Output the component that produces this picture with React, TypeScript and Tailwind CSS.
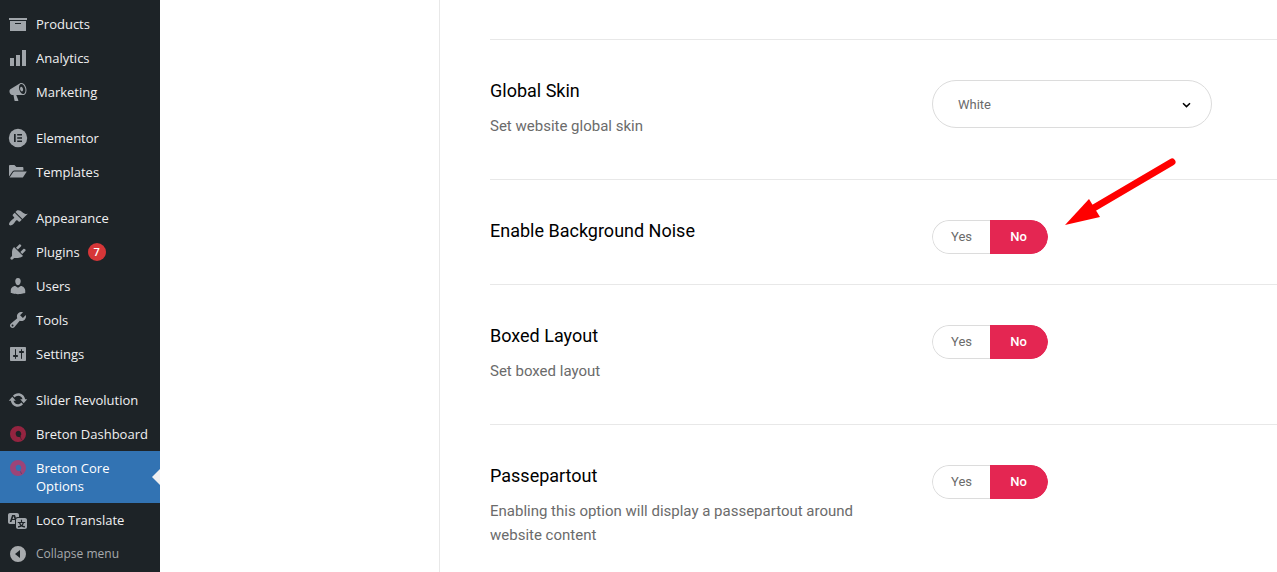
import { useState } from 'react';
import type { ReactNode } from 'react';

type MenuItem = {
	label: string;
	icon: ReactNode;
	count?: number;
	active?: boolean;
};

const DashIcon = ({ d }: { d: string }) => (
	<svg viewBox="0 0 20 20" fill="currentColor" className="size-5" aria-hidden="true">
		<path d={d} fillRule="evenodd" />
	</svg>
);

const BretonIcon = () => (
	<svg viewBox="0 0 20 20" className="size-5 opacity-60" aria-hidden="true">
		<path
			d="M10 2a8 8 0 1 0 0 16 8 8 0 0 0 0-16zm.2 4.8a3.1 3.1 0 0 1 2.2 5.3l.8 1.9-1.8-1.1a3.1 3.1 0 1 1-1.2-6.1z"
			fill="#e42652"
			fillRule="evenodd"
		/>
		<path d="M12.4 13.4l1.2 2.6" stroke="#8a1f3c" strokeWidth="1" />
	</svg>
);

const ElementorIcon = () => (
	<svg viewBox="0 0 20 20" className="size-5" aria-hidden="true">
		<circle cx="10" cy="10" r="9.2" fill="currentColor" />
		<path
			d="M6 6h1.7v8H6zM9.2 6H14v1.6H9.2zM9.2 9.2H14v1.6H9.2zM9.2 12.4H14V14H9.2z"
			fill="#1d2327"
		/>
	</svg>
);

const menu: MenuItem[][] = [
	[
		{
			label: 'Products',
			icon: <DashIcon d="M19 4v2H1V4h18zM2 7h16v10H2V7zm11 3V9H7v1h6z" />
		},
		{
			label: 'Analytics',
			icon: <DashIcon d="M18 18V2h-4v16h4zm-6 0V7H8v11h4zm-6 0v-8H2v8h4z" />
		},
		{
			label: 'Marketing',
			icon: (
				<DashIcon d="M18.15 5.94c.46 1.62.38 3.22-.02 4.48-.42 1.28-1.26 2.18-2.3 2.48-.16.06-.26.06-.4.06-.06.02-.12.02-.18.02-.06.02-.14.02-.22.02h-6.8l2.22 5.5c.02.14-.06.26-.14.34-.08.1-.24.16-.34.16H6.95c-.1 0-.26-.06-.34-.16-.08-.08-.16-.2-.14-.34l-1-5.5H4.25l-.02-.02c-.5.06-1.08-.18-1.54-.62s-.88-1.08-1.06-1.88c-.24-.8-.2-1.56-.02-2.2.18-.62.58-1.08 1.06-1.3l.02-.02 9-5.4c.1-.06.18-.1.24-.16.06-.04.14-.08.24-.12.16-.08.28-.12.5-.18 1.04-.3 2.24.1 3.22.98s1.84 2.24 2.26 3.86zm-2.58 5.98h-.02c.4-.1.74-.34 1.04-.7.58-.7.86-1.76.86-3.04 0-.64-.1-1.3-.28-1.98-.34-1.36-1.02-2.5-1.78-3.24s-1.68-1.1-2.46-.88c-.82.22-1.4.96-1.7 2-.32 1.04-.28 2.36.06 3.72.38 1.36 1 2.5 1.8 3.24.78.74 1.62 1.1 2.48.88zm-2.54-7.08c.22-.04.42-.02.62.04.38.16.76.48 1.02 1s.42 1.2.42 1.78c0 .3-.04.56-.12.8-.18.48-.44.84-.86.94-.34.1-.8-.06-1.14-.4s-.64-.86-.78-1.5c-.18-.62-.12-1.24.02-1.72s.48-.84.82-.94z" />
			)
		}
	],
	[
		{ label: 'Elementor', icon: <ElementorIcon /> },
		{
			label: 'Templates',
			icon: (
				<DashIcon d="M1 14.4V4.1C1 3.5 1.5 3 2 3h4.4l2 2h6c.6 0 1 .4 1 1v2.4H6.4c-.7 0-1.3.3-1.7.9zM1.6 15.6l3.7-5.6c.2-.4.6-.6 1-.6h12.5l-3.6 5.6c-.2.4-.6.6-1 .6z" />
			)
		}
	],
	[
		{
			label: 'Appearance',
			icon: (
				<DashIcon d="M14.48 11.06L7.41 3.99l1.5-1.5c.5-.56 2.3-.47 3.51.32 1.21.8 1.43 1.28 2.91 2.1 1.18.64 2.45 1.26 4.45.85zm-.71.71L6.7 4.7 4.93 6.47c-.39.39-.39 1.02 0 1.41l1.06 1.06c.39.39.39 1.03 0 1.42-.6.6-1.43 1.11-2.21 1.69-.35.26-.7.53-1.01.84C1.43 14.23.4 16.08 1.4 17.07c.99 1 2.84-.03 4.18-1.36.31-.31.58-.66.85-1.02.57-.78 1.08-1.61 1.69-2.21.39-.39 1.02-.39 1.41 0l1.06 1.06c.39.39 1.02.39 1.41 0z" />
			)
		},
		{
			label: 'Plugins',
			count: 7,
			icon: (
				<DashIcon d="M13.11 4.36L9.87 7.6 8 5.73l3.24-3.24c.35-.34 1.05-.2 1.56.32.52.51.66 1.21.31 1.55zm-8 1.77l.91-1.12 9.01 9.01-1.19.84c-.71.71-2.63 1.16-3.82 1.16H6.14L4.9 17.26c-.59.59-1.54.59-2.12 0-.59-.58-.59-1.53 0-2.12l1.24-1.24v-3.88c0-1.13.4-3.19 1.09-3.89zm7.26 3.97l3.24-3.24c.34-.35 1.04-.21 1.55.31.52.51.66 1.21.31 1.55l-3.24 3.25z" />
			)
		},
		{
			label: 'Users',
			icon: (
				<DashIcon d="M10 9.25c-2.27 0-2.73-3.44-2.73-3.44C7 4.02 7.82 2 9.97 2c2.16 0 2.98 2.02 2.71 3.81 0 0-.41 3.44-2.68 3.44zm0 2.57L12.72 10c2.39 0 4.52 2.33 4.52 4.53v2.49s-3.65 1.13-7.24 1.13c-3.65 0-7.24-1.13-7.24-1.13v-2.49c0-2.25 1.94-4.48 4.47-4.48z" />
			)
		},
		{
			label: 'Tools',
			icon: (
				<DashIcon d="M16.68 9.77c-1.34 1.34-3.3 1.67-4.95.99l-5.41 6.52c-.99.99-2.59.99-3.58 0s-.99-2.59 0-3.57l6.52-5.42c-.68-1.65-.35-3.61.99-4.95 1.28-1.28 3.12-1.62 4.72-1.06l-2.89 2.89 2.82 2.82 2.86-2.87c.53 1.58.18 3.39-1.08 4.65zM3.81 16.21c.4.39 1.04.39 1.43 0 .4-.4.4-1.04 0-1.43-.39-.4-1.03-.4-1.43 0-.39.39-.39 1.03 0 1.43z" />
			)
		},
		{
			label: 'Settings',
			icon: (
				<DashIcon d="M18 16V4c0-.55-.45-1-1-1H3c-.55 0-1 .45-1 1v12c0 .55.45 1 1 1h14c.55 0 1-.45 1-1zM8 11h1c.55 0 1 .45 1 1s-.45 1-1 1H8v1.5c0 .28-.22.5-.5.5s-.5-.22-.5-.5V13H6c-.55 0-1-.45-1-1s.45-1 1-1h1V5.5c0-.28.22-.5.5-.5s.5.22.5.5V11zm5-2h-1c-.55 0-1-.45-1-1s.45-1 1-1h1V5.5c0-.28.22-.5.5-.5s.5.22.5.5V7h1c.55 0 1 .45 1 1s-.45 1-1 1h-1v5.5c0 .28-.22.5-.5.5s-.5-.22-.5-.5V9z" />
			)
		}
	],
	[
		{
			label: 'Slider Revolution',
			icon: (
				<DashIcon d="M10.2 3.28c3.53 0 6.43 2.61 6.92 6h2.08l-3.5 4-3.5-4h2.32c-.45-1.97-2.21-3.45-4.32-3.45-1.45 0-2.73.71-3.54 1.78L4.95 5.66C6.23 4.2 8.11 3.28 10.2 3.28zm-.4 13.44c-3.52 0-6.43-2.61-6.92-6H.8l3.5-4c1.17 1.33 2.33 2.67 3.5 4H5.48c.45 1.97 2.21 3.45 4.32 3.45 1.45 0 2.73-.71 3.54-1.78l1.71 1.95c-1.28 1.46-3.15 2.38-5.25 2.38z" />
			)
		},
		{ label: 'Breton Dashboard', icon: <BretonIcon /> },
		{ label: 'Breton Core Options', icon: <BretonIcon />, active: true },
		{
			label: 'Loco Translate',
			icon: (
				<DashIcon d="M11 7H9.49c-.63 0-1.25.3-1.59.7L7 5H4.13l-2.39 7h1.69l.74-2H7v4H2c-1.1 0-2-.9-2-2V5c0-1.1.9-2 2-2h7c1.1 0 2 .9 2 2v2zM6.51 9H4.49l1-2.93zM10 8h7c1.1 0 2 .9 2 2v7c0 1.1-.9 2-2 2h-7c-1.1 0-2-.9-2-2v-7c0-1.1.9-2 2-2zm7.25 5v-1.08h-3.17V9.75h-1.16v2.17H9.75V13h1.28c.11.85.56 1.85 1.28 2.62-.87.36-1.89.62-2.31.62-.01.02.22.97.2 1.46.84 0 2.21-.5 3.28-1.15 1.09.65 2.48 1.15 3.34 1.15-.02-.49.2-1.44.2-1.46-.43 0-1.49-.27-2.38-.63.7-.77 1.14-1.77 1.25-2.61h1.36zm-3.81 1.93c-.5-.46-.85-1.13-1.01-1.93h2.09c-.17.8-.51 1.47-1 1.93l-.04.03s-.03-.02-.04-.03z" />
			)
		}
	]
];

const App = () => {
	return (
		<div className="flex h-screen overflow-hidden bg-white">
			<Sidebar />
			<div className="w-[280px] shrink-0 border-r border-[#e8e8e8]"></div>
			<main className="min-w-0 flex-1 pl-[50px] pt-[39px] font-[Roboto,sans-serif]">
				<div className="border-t border-[#e8e8e8]">
					<SkinRow />
					<ToggleRow name="noise" title="Enable Background Noise" pointed />
					<ToggleRow name="boxed" title="Boxed Layout" description="Set boxed layout" />
					<ToggleRow
						name="passepartout"
						title="Passepartout"
						description="Enabling this option will display a passepartout around website content"
					/>
				</div>
			</main>
		</div>
	);
};

const Sidebar = () => {
	return (
		<nav className="w-40 shrink-0 bg-[#1d2327] pt-[7px] font-['Open_Sans','Noto_Sans',sans-serif] text-[13px] leading-[18px] text-[#f0f0f1]">
			<div className="flex flex-col gap-3">
				{menu.map((group, i) => (
					<ul key={i}>
						{group.map(item => (
							<li key={item.label}>
								<a
									href="#"
									className={`relative flex p-2 ${item.active ? 'bg-[#3273b3] text-white' : ''}`}>
									<span className="-my-px mr-2 h-5 shrink-0 text-[#a0a5aa]">
										{item.icon}
									</span>
									<span className={item.active ? 'w-24' : ''}>{item.label}</span>
									{item.count && (
										<span className="ml-2 size-[18px] rounded-full bg-[#d63638] text-center text-[11px] font-semibold text-white">
											{item.count}
										</span>
									)}
									{item.active && (
										<span className="absolute right-0 top-1/2 -translate-y-1/2 border-8 border-transparent border-r-[#f0f0f1]"></span>
									)}
								</a>
							</li>
						))}
					</ul>
				))}
			</div>
			<button className="flex w-full p-2 text-left text-xs leading-[18px] text-[#a7aaad]">
				<span className="-my-px mr-2 h-5 shrink-0">
					<DashIcon d="M10 2a8 8 0 1 0 0 16 8 8 0 0 0 0-16zm2 4v8l-5-4z" />
				</span>
				Collapse menu
			</button>
		</nav>
	);
};

type RowProps = {
	title: string;
	description?: string;
	children: ReactNode;
};

const OptionRow = ({ title, description, children }: RowProps) => {
	return (
		<section className="grid grid-cols-[minmax(0,442px)_1fr] border-b border-[#e8e8e8] pb-[30px] pt-10">
			<div className="pr-12">
				<h4 className="text-lg leading-[22px] text-black">{title}</h4>
				{description && (
					<p className="mb-[11px] mt-3 text-[15px] leading-6 text-[#6b6b6b]">
						{description}
					</p>
				)}
			</div>
			<div className="relative">{children}</div>
		</section>
	);
};

const SkinRow = () => {
	return (
		<OptionRow title="Global Skin" description="Set website global skin">
			<div className="relative w-[280px]">
				<select
					aria-label="Global Skin"
					defaultValue="white"
					className="h-12 w-full appearance-none rounded-full border border-[#dcdcdc] bg-white px-[25px] pt-0.5 text-[13px] text-[#6b6b6b] outline-none">
					<option value="white">White</option>
					<option value="light">Light</option>
					<option value="dark">Dark</option>
				</select>
				<svg
					viewBox="0 0 10 10"
					className="pointer-events-none absolute right-5 top-5 size-2.5"
					aria-hidden="true">
					<path d="M1 3.2L4.5 6.6 8 3.2" fill="none" stroke="#000" strokeWidth="1.5" />
				</svg>
			</div>
		</OptionRow>
	);
};

type ToggleProps = {
	name: string;
	title: string;
	description?: string;
	pointed?: boolean;
};

const ToggleRow = ({ name, title, description, pointed }: ToggleProps) => {
	const [value, setValue] = useState('No');

	return (
		<OptionRow title={title} description={description}>
			<fieldset
				aria-label={title}
				className="relative flex h-[34px] w-[116px] overflow-hidden rounded-full text-[13px]">
				{['Yes', 'No'].map(option => (
					<label
						key={option}
						className={`flex flex-1 cursor-pointer items-center justify-center border first:rounded-l-full first:border-r-0 last:rounded-r-full last:border-l-0 ${
							value === option
								? 'border-[#e42652] bg-[#e42652] font-medium text-white'
								: 'border-[#dcdcdc] bg-white text-[#6b6b6b]'
						}`}>
						<input
							type="radio"
							name={name}
							value={option}
							checked={value === option}
							onChange={() => setValue(option)}
							className="sr-only"
						/>
						{option}
					</label>
				))}
			</fieldset>
			{pointed && <PointerArrow />}
		</OptionRow>
	);
};

const PointerArrow = () => (
	<svg
		viewBox="0 0 112 70"
		className="pointer-events-none absolute -top-16 left-[132px] h-[70px] w-28"
		aria-hidden="true">
		<path d="M28 53L108 6" stroke="#f00" strokeWidth="7" strokeLinecap="round" />
		<path d="M1 69L25 43L36 61z" fill="#f00" />
	</svg>
);

export default App;
